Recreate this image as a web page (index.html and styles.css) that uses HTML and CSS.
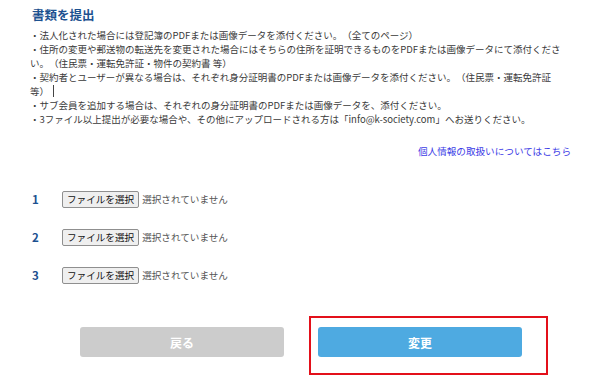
FILE: index.html
```html
<!DOCTYPE html>
<html lang="ja">
<head>
<meta charset="utf-8">
<link rel="stylesheet" href="styles.css">
</head>
<body>
<div class="page">
  <h2 class="title">書類を提出</h2>
  <div class="notes">
    <p>・法人化された場合には登記簿のPDFまたは画像データを添付ください。（全てのページ）</p>
    <p>・住所の変更や郵送物の転送先を変更された場合にはそちらの住所を証明できるものをPDFまたは画像データにて添付ください。（住民票・運転免許証・物件の契約書 等）</p>
    <p>・契約者とユーザーが異なる場合は、それぞれ身分証明書のPDFまたは画像データを添付ください。（住民票・運転免許証等）<span class="caret"></span></p>
    <p>・サブ会員を追加する場合は、それぞれの身分証明書のPDFまたは画像データを、添付ください。</p>
    <p>・3ファイル以上提出が必要な場合や、その他にアップロードされる方は「info@k-society.com」へお送りください。</p>
  </div>
  <div class="link-row"><a class="privacy" href="#">個人情報の取扱いについてはこちら</a></div>
  <div class="files">
    <div class="file-row"><span class="num">1</span><span class="file-btn">ファイルを選択</span><span class="file-name">選択されていません</span></div>
    <div class="file-row"><span class="num">2</span><span class="file-btn">ファイルを選択</span><span class="file-name">選択されていません</span></div>
    <div class="file-row"><span class="num">3</span><span class="file-btn">ファイルを選択</span><span class="file-name">選択されていません</span></div>
  </div>
  <div class="actions">
    <button class="btn btn-back">戻る</button>
    <div class="highlight-wrap">
      <button class="btn btn-submit">変更</button>
      <span class="highlight"></span>
    </div>
  </div>
</div>
</body>
</html>
```
FILE: styles.css
```css
* { box-sizing: border-box; }
html, body { margin: 0; padding: 0; background: #fff; }
body {
  font-family: "Noto Sans CJK JP", "Noto Sans", sans-serif;
  color: #3a3a3a;
  width: 600px;
  height: 383px;
  overflow: hidden;
  text-spacing-trim: space-all;
}
.page {
  padding: 6px 0 0 30px;
  width: 571px;
}
.title {
  margin: 0 0 0 2px;
  font-size: 12.5px;
  line-height: 18px;
  font-weight: bold;
  color: #1c5190;
}
.notes {
  width: 535px;
  margin-top: 4px;
  font-size: 9.5px;
  line-height: 14px;
}
.notes p { margin: 0; }
.caret {
  display: inline-block;
  width: 1px;
  height: 12px;
  background: #444;
  vertical-align: -2px;
  margin-left: 4px;
}
.link-row {
  display: flex;
  justify-content: flex-end;
  margin-top: 18px;
}
.privacy {
  font-size: 9.6px;
  line-height: 14px;
  color: #3c3ce6;
  text-decoration: none;
}
.files {
  margin-top: 32px;
  display: flex;
  flex-direction: column;
  gap: 20px;
}
.file-row {
  display: flex;
  align-items: center;
  height: 18px;
}
.num {
  width: 32px;
  padding-left: 2px;
  font-size: 11.5px;
  font-weight: bold;
  color: #1c5190;
}
.file-btn {
  display: inline-flex;
  align-items: center;
  height: 17px;
  padding: 0 4px;
  background: #efefef;
  border: 1px solid #8f8f8f;
  border-radius: 2px;
  font-size: 9.6px;
  color: #111;
}
.file-name {
  margin-left: 3px;
  font-size: 9.6px;
  color: #555;
}
.actions {
  margin-top: 43px;
  display: flex;
  align-items: center;
  padding-left: 50px;
  gap: 34px;
}
.btn {
  width: 204px;
  height: 30px;
  border: none;
  border-radius: 3px;
  color: #fff;
  font-family: "Noto Sans CJK JP", sans-serif;
  font-size: 12px;
  font-weight: bold;
}
.btn-back { background: #cccccc; }
.btn-submit { background: #4eaae1; }
.highlight-wrap { position: relative; }
.highlight {
  position: absolute;
  left: -9px;
  top: -11px;
  width: 239px;
  height: 59px;
  border: 2px solid #e3101a;
}
```
